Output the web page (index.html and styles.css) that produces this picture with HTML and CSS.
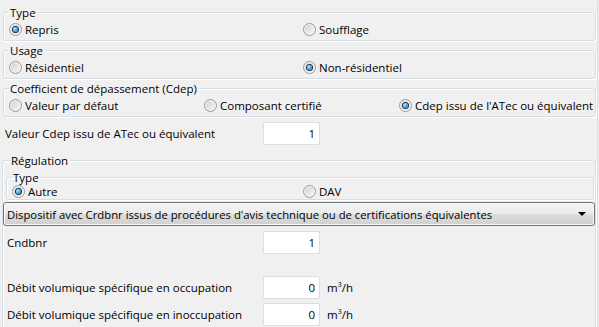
FILE: index.html
```html
<!DOCTYPE html>
<html lang="fr">
<head>
    <meta charset="UTF-8">
    <title>Ventilation</title>
    <link rel="stylesheet" href="styles.css">
</head>
<body>
    <div class="panel">
        <fieldset class="group">
            <legend>Type</legend>
            <div class="choices cols-2">
                <span class="radio checked"><span class="radio-mark"></span>Repris</span>
                <span class="radio"><span class="radio-mark"></span>Soufflage</span>
            </div>
        </fieldset>

        <fieldset class="group">
            <legend>Usage</legend>
            <div class="choices cols-2">
                <span class="radio"><span class="radio-mark"></span>Résidentiel</span>
                <span class="radio checked"><span class="radio-mark"></span>Non-résidentiel</span>
            </div>
        </fieldset>

        <fieldset class="group">
            <legend>Coefficient de dépassement (Cdep)</legend>
            <div class="choices cols-3">
                <span class="radio"><span class="radio-mark"></span>Valeur par défaut</span>
                <span class="radio"><span class="radio-mark"></span>Composant certifié</span>
                <span class="radio checked"><span class="radio-mark"></span>Cdep issu de l'ATec ou équivalent</span>
            </div>
        </fieldset>

        <div class="field top-field">
            <span class="field-label">Valeur Cdep issu de ATec ou équivalent</span>
            <span class="input">1</span>
        </div>

        <fieldset class="group regulation">
            <legend>Régulation</legend>

            <fieldset class="group sub">
                <legend>Type</legend>
                <div class="choices cols-2-sub">
                    <span class="radio checked"><span class="radio-mark"></span>Autre</span>
                    <span class="radio"><span class="radio-mark"></span>DAV</span>
                </div>
            </fieldset>

            <div class="select">
                <span>Dispositif avec Crdbnr issus de procédures d'avis technique ou de certifications équivalentes</span>
                <span class="select-arrow"></span>
            </div>

            <div class="field cndbnr">
                <span class="field-label">Cndbnr</span>
                <span class="input">1</span>
            </div>

            <div class="field debit-occ">
                <span class="field-label">Débit volumique spécifique en occupation</span>
                <span class="input">0</span>
                <span class="unit">m<sup>3</sup>/h</span>
            </div>

            <div class="field debit-inocc">
                <span class="field-label">Débit volumique spécifique en inoccupation</span>
                <span class="input">0</span>
                <span class="unit">m<sup>3</sup>/h</span>
            </div>
        </fieldset>
    </div>
</body>
</html>
```

FILE: styles.css
```css
body {
    margin: 0;
    background-color: #f0f0f0;
    color: #000;
    font-family: 'Open Sans', 'Noto Sans', sans-serif;
    font-size: 11.5px;
    overflow: hidden;
}

.panel {
    width: 598px;
    height: 327px;
    box-sizing: border-box;
    padding-top: 5px;
    border-right: 1px solid #d5dfe5;
    overflow: hidden;
}

.group {
    margin: 2px 1px 0 3px;
    padding: 0 5px 1px;
    border: 1px solid #d5dfe5;
    border-radius: 3px;
    box-shadow: inset 1px 1px 0 #fff, 1px 1px 0 #fff;
    min-width: 0;
}

.group:first-child {
    margin-top: 0;
}

.group legend {
    padding: 0 1px;
    line-height: 15px;
}

.choices {
    display: grid;
    height: 19px;
    align-items: center;
}

.cols-2 {
    grid-template-columns: 294px 1fr;
}

.cols-3 {
    grid-template-columns: 195px 195px 1fr;
}

.cols-2-sub {
    grid-template-columns: 291px 1fr;
    height: 13px;
}

.radio {
    display: flex;
    align-items: center;
    gap: 3px;
    white-space: nowrap;
}

.radio-mark {
    width: 13px;
    height: 13px;
    box-sizing: border-box;
    border-radius: 50%;
    border: 1px solid #9a9a9a;
    background: linear-gradient(135deg, #cfcfcf, #f9f9f9);
    box-shadow: inset 0 0 0 1px #f4f4f4;
    display: flex;
    align-items: center;
    justify-content: center;
}

.radio.checked .radio-mark::after {
    content: "";
    width: 5px;
    height: 5px;
    border-radius: 50%;
    background: radial-gradient(circle at 35% 35%, #c6efff 0, #3aa2e6 50%, #0d5a9e 100%);
    box-shadow: 0 0 0 1px #17324f;
}

.field {
    display: grid;
    grid-template-columns: 258px 57px auto;
    align-items: center;
    padding-left: 5px;
}

.top-field {
    margin-top: 5px;
}

.field-label {
    white-space: nowrap;
}

.input {
    height: 23px;
    box-sizing: border-box;
    background-color: #fff;
    border: 1px solid #dadde2;
    border-radius: 2px;
    padding-right: 4px;
    text-align: right;
    line-height: 21px;
    color: #000;
}

.unit {
    padding-left: 7px;
}

.unit sup {
    font-size: 7px;
}

.regulation {
    margin: 8px 1px 0 2px;
    padding: 0 0 20px;
}

.regulation > legend {
    margin-left: 7px;
}

.sub {
    margin: 3px 1px 0 3px;
    padding: 0 5px 2px;
}

.sub legend {
    line-height: 13px;
}

.select {
    margin-top: 2px;
    height: 24px;
    box-sizing: border-box;
    border: 1px solid #707070;
    border-radius: 3px;
    background: linear-gradient(#f3f3f3 0%, #ebebeb 50%, #dddddd 50%, #d0d0d0 100%);
    box-shadow: inset 0 0 0 1px #fbfbfb;
    display: flex;
    align-items: center;
    justify-content: space-between;
    padding: 0 8px 0 3px;
    white-space: nowrap;
    font-size: 11.3px;
}

.select-arrow {
    width: 0;
    height: 0;
    border-left: 4px solid transparent;
    border-right: 4px solid transparent;
    border-top: 4px solid #000;
}

.regulation .field {
    grid-template-columns: 256px 57px auto;
    padding-left: 4px;
}

.cndbnr {
    margin-top: 5px;
}

.debit-occ {
    margin-top: 22px;
}

.debit-inocc {
    margin-top: 4px;
}
```
